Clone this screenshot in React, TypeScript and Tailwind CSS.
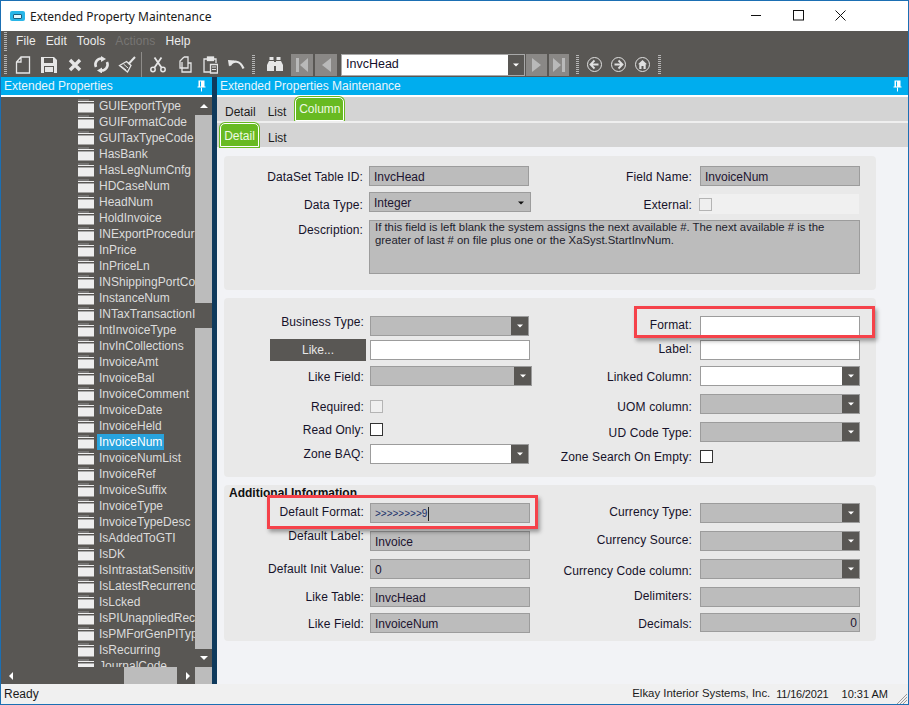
import type { ReactNode } from "react";

const treeItems = [
  "GUIExportType", "GUIFormatCode", "GUITaxTypeCode", "HasBank", "HasLegNumCnfg", "HDCaseNum", "HeadNum", "HoldInvoice",
  "INExportProcedur", "InPrice", "InPriceLn", "INShippingPortCo", "InstanceNum", "INTaxTransactionI", "IntInvoiceType",
  "InvInCollections", "InvoiceAmt", "InvoiceBal", "InvoiceComment", "InvoiceDate", "InvoiceHeld", "InvoiceNum",
  "InvoiceNumList", "InvoiceRef", "InvoiceSuffix", "InvoiceType", "InvoiceTypeDesc", "IsAddedToGTI", "IsDK",
  "IsIntrastatSensitiv", "IsLatestRecurrenc", "IsLcked", "IsPIUnappliedRec", "IsPMForGenPIType", "IsRecurring", "JournalCode",
];

function Grip({ className = "" }: { className?: string }) {
  return <div className={`w-[3px] h-[19px] shrink-0 bg-[repeating-linear-gradient(180deg,#b5b5b5_0,#b5b5b5_1px,transparent_1px,transparent_2px)] ${className}`} />;
}

function Tool({ children }: { children: ReactNode }) {
  return <div className="w-[26px] h-[25px] flex items-center justify-center shrink-0">{children}</div>;
}

function Folder() {
  return (
    <svg width="16" height="14" viewBox="0 0 16 14" className="shrink-0">
      <rect x="0" y="0.5" width="11" height="1" fill="#8f8f8f" />
      <rect x="0" y="2" width="16" height="1" fill="#eeeeee" />
      <rect x="0" y="5" width="16" height="8.5" fill="#eeeeee" />
      <rect x="0" y="4" width="16" height="1" fill="#a9a9a9" />
    </svg>
  );
}

function Tri({ dir, color = "#fff" }: { dir: "up" | "down" | "left" | "right"; color?: string }) {
  const pts = { up: "0,5 8,5 4,1", down: "0,1 8,1 4,5", left: "5,0 5,8 1,4", right: "1,0 1,8 5,4" }[dir];
  const box = dir === "up" || dir === "down" ? "0 0 8 6" : "0 0 6 8";
  return (
    <svg width={dir === "up" || dir === "down" ? 8 : 6} height={dir === "up" || dir === "down" ? 6 : 8} viewBox={box}>
      <polygon points={pts} fill={color} />
    </svg>
  );
}

// the little arrow on the dropdowns
function Caret({ color = "#fff" }: { color?: string }) {
  return (
    <svg width="6" height="4" viewBox="0 0 6 4">
      <polygon points="0,0.5 6,0.5 3,3.5" fill={color} />
    </svg>
  );
}

function Pin() {
  return (
    <svg width="9" height="12" viewBox="0 0 9 12">
      <path d="M1.5 0.5h6v6h1v1h-8v-1h1z M3 1.5v5h1v-5z" fill="#fff" fillRule="evenodd" />
      <rect x="4" y="7.5" width="1" height="4" fill="#fff" />
    </svg>
  );
}

function Header({ title }: { title: string }) {
  return (
    <div className="h-[18px] bg-[#00adee] flex items-center justify-between pl-[3px] pr-[6px] text-[#e8f6fd] shrink-0">
      <span className="whitespace-nowrap">{title}</span>
      <Pin />
    </div>
  );
}

function Box({ className = "", white, children }: { className?: string; white?: boolean; children?: ReactNode }) {
  return (
    <div className={`h-[20px] shrink-0 border border-[#9c9c9c] flex items-center pl-[4px] pt-[1px] text-[#1c1430] whitespace-nowrap ${white ? "bg-white" : "bg-[#bcbcbc]"} ${className}`}>
      {children}
    </div>
  );
}

function Combo({ className = "", white }: { className?: string; white?: boolean }) {
  return (
    <div className={`h-[20px] shrink-0 border border-[#9c9c9c] flex justify-end ${white ? "bg-white" : "bg-[#bcbcbc]"} ${className}`}>
      <div className="w-[17px] bg-[#595754] flex items-center justify-center"><Caret /></div>
    </div>
  );
}

function Check({ off }: { off?: boolean }) {
  return <div className={`w-[13px] h-[13px] shrink-0 border ${off ? "border-[#b4b4b4] bg-[#efefef]" : "border-[#333] bg-white"}`} />;
}

function Label({ text, className = "", width = "w-[130px]" }: { text: string; className?: string; width?: string }) {
  return <div className={`${width} h-[13px] pt-[1px] shrink-0 text-right text-[#16122a] whitespace-nowrap leading-[13px] tracking-[0.12px] ${className}`}>{text}</div>;
}

function Row({ label, className = "", labelClass = "", gap = "gap-[6px]", width, children }: { label: string; className?: string; labelClass?: string; gap?: string; width?: string; children: ReactNode }) {
  return (
    <div className={`flex items-center ${gap} ${className}`}>
      <Label text={label} className={labelClass} width={width} />
      {children}
    </div>
  );
}

function RightRow(props: { label: string; className?: string; labelClass?: string; children: ReactNode }) {
  return <Row {...props} gap="gap-[8px]" width="w-[132px]" />;
}

function Marker({ className }: { className: string }) {
  return <div className={`absolute border-[3px] border-[#f5424a] shadow-[2px_3px_4px_rgba(0,0,0,0.35)] ${className}`} />;
}

export default function App() {
  return (
    <div className="w-[909px] h-[705px] overflow-hidden border border-[#1b6fb3] flex flex-col bg-white text-[12px] font-['Liberation_Sans',Arial,sans-serif]">
      {/* title bar */}
      <div className="h-[30px] flex items-center shrink-0 bg-white">
        <div className="ml-[9px] w-[15px] h-[10px] rounded-[2px] bg-[#29b6e8] flex items-center justify-center">
          <div className="w-[9px] h-[5px] rounded-[1px] bg-[#e6f8fd] border border-[#1c5f80]" />
        </div>
        <span className="ml-[5px] mt-[1px] text-[12px] text-[#1a1a1a] font-['Noto_Sans',sans-serif]">Extended Property Maintenance</span>
        <div className="ml-auto flex items-center text-black">
          <svg width="42" height="12" viewBox="0 0 42 12"><rect x="0" y="5" width="10" height="1" fill="#111" /></svg>
          <svg width="42" height="12" viewBox="0 0 42 12"><rect x="0.5" y="0.5" width="10" height="9.5" fill="none" stroke="#111" /></svg>
          <svg width="11" height="12" viewBox="0 0 11 12" className="mr-[62px]"><path d="M0.5 0.5L10.5 10.5M10.5 0.5L0.5 10.5" stroke="#111" fill="none" /></svg>
        </div>
      </div>

      {/* menu */}
      <div className="h-[21px] bg-[#595754] flex items-center shrink-0 text-[#ededed]">
        <Grip className="ml-[3px] h-[12px]" />
        <div className="flex ml-[9px] gap-[10px] tracking-[0.1px] pb-[2px]">
          <span>File</span>
          <span>Edit</span>
          <span>Tools</span>
          <span className="text-[#777573]">Actions</span>
          <span>Help</span>
        </div>
      </div>

      {/* toolbar */}
      <div className="h-[25px] bg-[#595754] flex items-center shrink-0">
        <Grip className="ml-[3px] mr-[3px]" />
        <Tool>
          <svg width="16" height="18" viewBox="0 0 16 18"><path d="M6 1h8.5v16h-13V6z M6 1v5H1.5" fill="none" stroke="#e6e6e6" strokeWidth="1.3" /></svg>
        </Tool>
        <Tool>
          <svg width="16" height="16" viewBox="0 0 16 16"><path d="M0 0h13l3 3v13H0z" fill="#e6e6e6" /><rect x="3" y="1" width="9" height="5" fill="#595754" /><rect x="3" y="9" width="10" height="7" fill="#595754" /><rect x="4" y="10" width="8" height="5" fill="#e6e6e6" /></svg>
        </Tool>
        <Tool>
          <svg width="14" height="14" viewBox="0 0 14 14"><path d="M2 2L12 12M12 2L2 12" stroke="#e6e6e6" strokeWidth="3.4" /></svg>
        </Tool>
        <Tool>
          <svg width="17" height="17" viewBox="0 0 17 17">
            <path d="M3 11A6 6 0 0 1 9 2.5" fill="none" stroke="#e6e6e6" strokeWidth="2.6" />
            <path d="M8 0l5 3-5 3z" fill="#e6e6e6" />
            <path d="M14 6A6 6 0 0 1 8 14.5" fill="none" stroke="#e6e6e6" strokeWidth="2.6" />
            <path d="M9 11.5l-5 3 5 3z" fill="#e6e6e6" />
          </svg>
        </Tool>
        <Tool>
          <svg width="18" height="18" viewBox="0 0 18 18">
            <path d="M17 1L10.5 8" stroke="#e6e6e6" strokeWidth="2" />
            <path d="M8.5 5.5l4.5 4-3.5 6.5-8-6.5z" fill="none" stroke="#e6e6e6" strokeWidth="1.3" />
            <path d="M3 10l5 4M5.5 8l4.5 4" stroke="#e6e6e6" strokeWidth="1" />
          </svg>
        </Tool>
        <div className="w-[1px] h-[25px] bg-[#8e8c89] ml-[1px] mr-[3px]" />
        <Tool>
          <svg width="16" height="16" viewBox="0 0 16 16" fill="none" stroke="#e6e6e6" strokeWidth="1.5">
            <circle cx="3" cy="12.5" r="2.2" /><circle cx="13" cy="12.5" r="2.2" />
            <path d="M4.5 10.5L11.5 0.5M11.5 10.5L4.5 0.5" strokeWidth="1.8" />
          </svg>
        </Tool>
        <Tool>
          <svg width="15" height="18" viewBox="0 0 15 18" fill="none" stroke="#e6e6e6" strokeWidth="1.3"><path d="M7 1h4v4M7 1L3 5v7h8V5" /><path d="M5 6v6M5 12v4h9V7h-3" /></svg>
        </Tool>
        <Tool>
          <svg width="15" height="18" viewBox="0 0 15 18" fill="none" stroke="#e6e6e6" strokeWidth="1.3"><path d="M5 3H1v13h6M10 3h3v4" /><rect x="4.5" y="1" width="6" height="3.5" fill="#e6e6e6" /><path d="M7.5 8.5h7v8.5h-7z" fill="#595754" /><path d="M9 11h4M9 13.5h4" strokeWidth="1" /></svg>
        </Tool>
        <Tool>
          <svg width="17" height="12" viewBox="0 0 17 12"><path d="M2 6.5C5 1 12 1 15.5 9.5" fill="none" stroke="#e6e6e6" strokeWidth="2.2" /><path d="M0 1l6.5 0.5-5.5 6z" fill="#e6e6e6" /></svg>
        </Tool>
        <Grip className="ml-[3px] mr-[7px]" />
        <Tool>
          <svg width="16" height="15" viewBox="0 0 16 15" fill="#e6e6e6"><rect x="2.5" y="0" width="4" height="3" /><rect x="9.5" y="0" width="4" height="3" /><path d="M2 4h5v10H0V8z" /><path d="M9 4h5l2 4v6H9z" /><rect x="7" y="5" width="2" height="4" /></svg>
        </Tool>
        <div className="flex gap-[2px] ml-[3px]">
          <div className="w-[22px] h-[22px] bg-[#8a8886] flex items-center justify-center">
            <svg width="13" height="14" viewBox="0 0 13 14" fill="#b9b9b9"><rect x="0" y="0" width="3" height="14" /><polygon points="12,0 12,14 4,7" /></svg>
          </div>
          <div className="w-[22px] h-[22px] bg-[#8a8886] flex items-center justify-center">
            <svg width="9" height="14" viewBox="0 0 9 14" fill="#b9b9b9"><polygon points="9,0 9,14 0,7" /></svg>
          </div>
        </div>
        <div className="w-[184px] h-[22px] ml-[4px] border border-[#a8a8a8] bg-white flex items-stretch">
          <span className="flex-1 flex items-center pl-[4px] text-[#15102c] text-[12.5px]">InvcHead</span>
          <div className="w-[16px] bg-[#595754] flex items-center justify-center"><Caret /></div>
        </div>
        <div className="flex gap-[2px] ml-[1px]">
          <div className="w-[21px] h-[22px] bg-[#8a8886] flex items-center justify-center">
            <svg width="9" height="14" viewBox="0 0 9 14" fill="#b9b9b9"><polygon points="0,0 0,14 9,7" /></svg>
          </div>
          <div className="w-[20px] h-[22px] bg-[#8a8886] flex items-center justify-center">
            <svg width="13" height="14" viewBox="0 0 13 14" fill="#b9b9b9"><polygon points="0,0 0,14 8,7" /><rect x="9" y="0" width="3" height="14" /></svg>
          </div>
        </div>
        <Grip className="ml-[7px] mr-[8px]" />
        <div className="flex gap-[9px]">
          <svg width="15" height="15" viewBox="0 0 15 15" fill="none" stroke="#e0e0e0"><circle cx="7.5" cy="7.5" r="7" /><path d="M3.5 7.5h8M7.5 3.5l-4 4 4 4" strokeWidth="1.8" /></svg>
          <svg width="15" height="15" viewBox="0 0 15 15" fill="none" stroke="#e0e0e0"><circle cx="7.5" cy="7.5" r="7" /><path d="M3.5 7.5h8M7.5 3.5l4 4-4 4" strokeWidth="1.8" /></svg>
          <svg width="15" height="15" viewBox="0 0 15 15" fill="none" stroke="#e0e0e0"><circle cx="7.5" cy="7.5" r="7" /><path d="M7.5 3L3 7.2h1.3V12h6.4V7.2H12z" fill="#e0e0e0" stroke="none" /><rect x="6.5" y="9" width="2" height="3" fill="#595754" stroke="none" /></svg>
        </div>
        <Grip className="ml-[8px]" />
      </div>

      {/* body */}
      <div className="flex-1 min-h-0 flex">
        {/* left panel */}
        <div className="w-[211px] flex flex-col shrink-0 bg-[#595754]">
          <Header title="Extended Properties" />
          <div className="h-[2px] bg-white shrink-0" />
          <div className="flex-1 min-h-0 flex">
            <div className="flex-1 min-w-0 overflow-hidden pt-[1px]">
              {treeItems.map((name) => (
                <div key={name} className="h-[16px] flex items-center pl-[77px] text-[#dcdcdc] whitespace-nowrap">
                  <Folder />
                  <span className={`ml-[3px] px-[2px] h-[16px] leading-[16px] ${name === "InvoiceNum" ? "bg-[#29a3dd] text-white" : ""}`}>{name}</span>
                </div>
              ))}
            </div>
            <div className="w-[17px] shrink-0 flex flex-col items-center">
              <div className="h-[18px] shrink-0 flex items-center justify-center"><Tri dir="up" /></div>
              <div className="w-full h-[188px] bg-[#bcbcbc] shrink-0" />
              <div className="w-full h-[25px] shrink-0" />
              <div className="w-full h-[321px] bg-[#bcbcbc] shrink-0" />
              <div className="h-[17px] shrink-0 flex items-center justify-center"><Tri dir="down" /></div>
            </div>
          </div>
          <div className="h-[17px] shrink-0 flex items-center">
            <div className="ml-[7px]"><Tri dir="left" /></div>
            <div className="w-[53px] h-full bg-[#bcbcbc] ml-[110px]" />
            <div className="ml-[8px]"><Tri dir="right" /></div>
            <div className="w-[17px] h-full bg-[#bcbcbc] ml-auto" />
          </div>
        </div>

        {/* splitter */}
        <div className="w-[5px] shrink-0 bg-[#0f3a5c]" />

        {/* right panel */}
        <div className="flex-1 min-w-0 flex flex-col bg-[#f2f3f6]">
          <Header title="Extended Properties Maintenance" />
          <div className="h-[2px] bg-white shrink-0" />
          <div className="h-[24px] bg-[#d4d4d4] flex items-center shrink-0 text-[#1c1c1c]">
            <span className="ml-[8px] mt-[5px]">Detail</span>
            <span className="ml-[12px] mt-[5px]">List</span>
            <span className="ml-[9px] w-[49px] h-[24px] rounded-t-[5px] border border-white bg-[#68ba22] shadow-[0_0_0_1px_#68ba22] text-[#eef9e2] flex items-center justify-center">Column</span>
          </div>
          <div className="h-[2px] bg-[#efefef] shrink-0" />
          <div className="h-[24px] bg-[#d4d4d4] flex items-center shrink-0 text-[#1c1c1c]">
            <span className="ml-[3px] w-[39px] h-[24px] rounded-t-[5px] border border-white bg-[#68ba22] shadow-[0_0_0_1px_#68ba22] text-[#eef9e2] flex items-center justify-center pt-[1px]">Detail</span>
            <span className="ml-[9px] mt-[5px]">List</span>
          </div>

          <div className="flex-1 min-h-0 flex flex-col gap-[8px] pt-[9px] pl-[7px] pr-[32px]">
            {/* column info */}
            <section className="h-[134px] shrink-0 rounded-[4px] bg-[#e9e9e9] pt-[10px] pl-[9px]">
              <div className="flex">
                <div className="w-[327px] shrink-0 flex flex-col">
                  <Row label="DataSet Table ID:"><Box className="w-[160px]">InvcHead</Box></Row>
                  <Row label="Data Type:" className="mt-[6px]" labelClass="translate-y-[2px]">
                    <Box className="w-[162px] justify-between pr-[6px]">
                      <span>Integer</span>
                      <Caret color="#111" />
                    </Box>
                  </Row>
                </div>
                <div className="flex flex-col">
                  <RightRow label="Field Name:"><Box className="w-[160px]">InvoiceNum</Box></RightRow>
                  <RightRow label="External:" className="mt-[8px]">
                    <div className="-ml-[1px] w-[160px] h-[20px] bg-[#f0f0f0] flex items-center"><Check off /></div>
                  </RightRow>
                </div>
              </div>
              <Row label="Description:" className="mt-[6px] !items-start" labelClass="translate-y-[3px]">
                <div className="w-[491px] h-[54px] border border-[#9c9c9c] bg-[#bcbcbc] px-[5px] leading-[13px] text-[11.35px] text-[#1c1c2c]">
                  If this field is left blank the system assigns the next available #. The next available # is the greater of last # on file plus one or the XaSyst.StartInvNum.
                </div>
              </Row>
            </section>

            {/* format fields */}
            <section className="relative h-[179px] shrink-0 rounded-[4px] bg-[#e9e9e9] pt-[18px] pl-[10px] flex">
              <div className="w-[326px] shrink-0 flex flex-col">
                <Row label="Business Type:" labelClass="-translate-y-[5px]"><Combo className="w-[159px]" /></Row>
                <div className="flex items-center gap-[4px] mt-[3px]">
                  <div className="ml-[36px] w-[96px] h-[22px] bg-[#595754] text-[#e8e8e8] flex items-center justify-center">Like...</div>
                  <Box white className="w-[160px]" />
                </div>
                <Row label="Like Field:" className="mt-[5px]"><Combo className="w-[162px]" /></Row>
                <Row label="Required:" className="mt-[14px]"><Check off /></Row>
                <Row label="Read Only:" className="mt-[10px]"><Check /></Row>
                <Row label="Zone BAQ:" className="mt-[8px]" labelClass="-translate-y-[1px]"><Combo white className="w-[159px]" /></Row>
              </div>
              <div className="flex flex-col">
                <RightRow label="Format:" labelClass="-translate-y-[2px]"><Box white className="w-[160px]" /></RightRow>
                <RightRow label="Label:" className="mt-[4px]" labelClass="-translate-y-[2px]"><Box white className="w-[160px]" /></RightRow>
                <RightRow label="Linked Column:" className="mt-[6px]"><Combo white className="w-[160px]" /></RightRow>
                <RightRow label="UOM column:" className="mt-[8px]" labelClass="translate-y-[2px]"><Combo className="w-[160px]" /></RightRow>
                <RightRow label="UD Code Type:" className="mt-[8px]"><Combo className="w-[160px]" /></RightRow>
                <RightRow label="Zone Search On Empty:" className="mt-[8px]"><Check /></RightRow>
              </div>
              <Marker className="left-[410px] top-[8px] w-[241px] h-[32px]" />
            </section>

            {/* additional information */}
            <section className="relative h-[156px] shrink-0 rounded-[4px] bg-[#e9e9e9] pt-[2px]">
              <p className="h-[12px] leading-[12px] ml-[5px] font-bold text-[#111]">Additional Information</p>
              <div className="flex mt-[4px] pl-[10px]">
                <div className="w-[326px] shrink-0 flex flex-col">
                  <Row label="Default Format:" labelClass="-translate-y-[2px]">
                    <Box className="w-[160px] text-[10px] text-[#20306a]">
                      &gt;&gt;&gt;&gt;&gt;&gt;&gt;&gt;9<span className="ml-[1px] w-[1px] h-[14px] bg-[#222]" />
                    </Box>
                  </Row>
                  <Row label="Default Label:" className="mt-[8px]" labelClass="-translate-y-[6px]"><Box className="w-[160px]">Invoice</Box></Row>
                  <Row label="Default Init Value:" className="mt-[8px]" labelClass="-translate-y-[1px]"><Box className="w-[160px]">0</Box></Row>
                  <Row label="Like Table:" className="mt-[8px]" labelClass="-translate-y-[1px]"><Box className="w-[160px]">InvcHead</Box></Row>
                  <Row label="Like Field:" className="mt-[6px]"><Box className="w-[160px]">InvoiceNum</Box></Row>
                </div>
                <div className="flex flex-col">
                  <RightRow label="Currency Type:" labelClass="-translate-y-[2px]"><Combo className="w-[160px]" /></RightRow>
                  <RightRow label="Currency Source:" className="mt-[8px]" labelClass="-translate-y-[2px]"><Combo className="w-[160px]" /></RightRow>
                  <RightRow label="Currency Code column:" className="mt-[8px]" labelClass="translate-y-[1px]"><Combo className="w-[160px]" /></RightRow>
                  <RightRow label="Delimiters:" className="mt-[8px]" labelClass="-translate-y-[2px]"><Box className="w-[160px]" /></RightRow>
                  <RightRow label="Decimals:" className="mt-[6px]" labelClass="translate-y-[1px]"><Box className="w-[160px] !h-[19px] justify-end pr-[2px]">0</Box></RightRow>
                </div>
              </div>
              <Marker className="left-[43px] top-[10px] w-[271px] h-[34px]" />
            </section>
          </div>
        </div>
      </div>

      {/* status bar */}
      <div className="h-[20px] shrink-0 bg-[#f0f0f0] flex items-center pl-[3px] text-[#1a1a1a]">
        <span>Ready</span>
        <span className="ml-auto text-[11.4px]">Elkay Interior Systems, Inc.</span>
        <span className="ml-[6px] text-[11px] tracking-[-0.2px]">11/16/2021</span>
        <span className="ml-[13px] text-[11px]">10:31 AM</span>
        <svg width="20" height="18" viewBox="0 0 20 18" className="self-end">
          <path d="M19 8L9 18M19 11L12 18M19 14L15 18" stroke="#9a9a9a" fill="none" />
        </svg>
      </div>
    </div>
  );
}
